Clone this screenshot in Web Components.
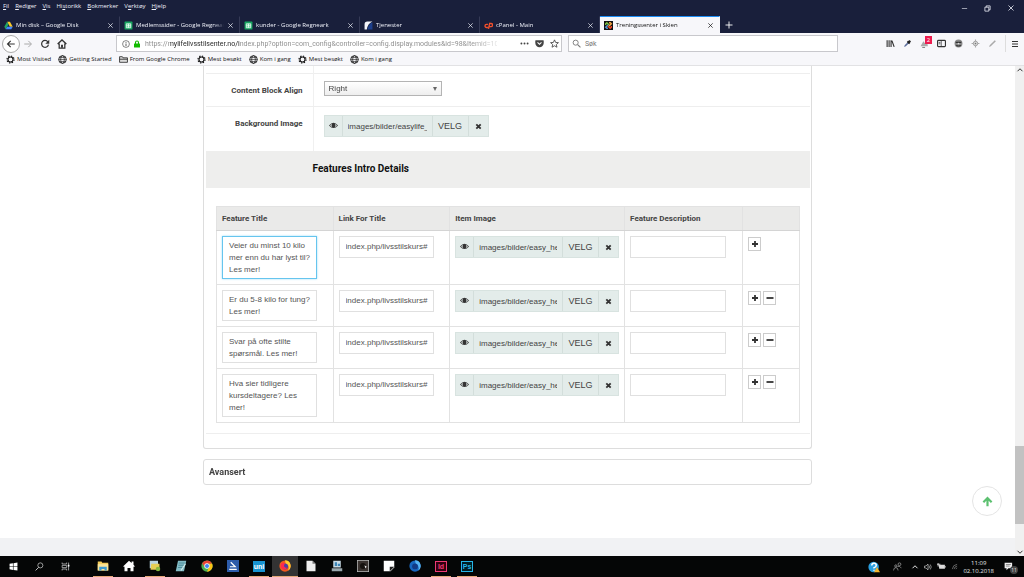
<!DOCTYPE html>
<html lang="no">
<head>
<meta charset="utf-8">
<title>Treningssenter i Skien</title>
<style>
html, body { height: 100%; }
body { margin: 0; display: flex; flex-direction: column; background: #fff; font-family: "Liberation Sans", Arial, sans-serif; font-size: 8px; color: #444; overflow: hidden; }
settings-page { flex: 1; min-height: 0; }
</style>
</head>
<body>
<browser-chrome>
  <browser-tab slot="tabs" icon="drive">Min disk – Google Disk</browser-tab>
  <browser-tab slot="tabs" icon="sheet">Medlemssider - Google Regneark</browser-tab>
  <browser-tab slot="tabs" icon="sheet">kunder - Google Regneark</browser-tab>
  <browser-tab slot="tabs" icon="page">Tjenester</browser-tab>
  <browser-tab slot="tabs" icon="cpanel">cPanel - Main</browser-tab>
  <browser-tab slot="tabs" icon="joomla" active>Treningssenter i Skien</browser-tab>
  <bookmark-link slot="bookmarks" icon="gear">Most Visited</bookmark-link>
  <bookmark-link slot="bookmarks" icon="globe">Getting Started</bookmark-link>
  <bookmark-link slot="bookmarks" icon="folder">From Google Chrome</bookmark-link>
  <bookmark-link slot="bookmarks" icon="gear">Mest besøkt</bookmark-link>
  <bookmark-link slot="bookmarks" icon="globe">Kom i gang</bookmark-link>
  <bookmark-link slot="bookmarks" icon="gear">Mest besøkt</bookmark-link>
  <bookmark-link slot="bookmarks" icon="globe">Kom i gang</bookmark-link>
</browser-chrome>
<settings-page></settings-page>
<task-bar></task-bar>

<script>
const stroke = (d, c = 'currentColor', w = 1.6) => `<path d="${d}" fill="none" stroke="${c}" stroke-width="${w}"/>`;
const ICONS = {
  drive: '<path d="M5.5 1.5h5L15.500 10h-5z" fill="#fbc926"/><path d="M5.500 1.500L.5 10.200 3 14.500 8 6z" fill="#20a464"/><path d="M5.700 10h9.800L13 14.500H3z" fill="#4387fd"/>',
  sheet: '<rect x="1" y="1" width="14" height="14" rx="1" fill="#18a560"/><path d="M4 5h8v7H4zM4 8.500h8M8 5v7" fill="#4fc98a" stroke="#fff" stroke-width="1.300"/>',
  page: '<path d="M1 15V6q0-5 5-5h9Q7 4 5 15z" fill="#f4f6fb"/><path d="M6 15Q8 5 15 2v13z" fill="#1c3f8c"/>',
  cpanel: '<path d="M7 6H4.500a2.500 2.500 0 0 0 0 5.500H7M8 14l2-9.500h2.500a2.500 2.500 0 0 1 0 5.500H9" fill="none" stroke="#f4502c" stroke-width="2.400"/>',
  joomla: '<rect width="16" height="16" fill="#111"/><path d="M3 7V5l2-2 4 4" fill="none" stroke="#7ac143" stroke-width="2.500"/><path d="M9 3h2l2 2-4 4" fill="none" stroke="#f9a541" stroke-width="2.500"/><path d="M13 9v2l-2 2-4-4" fill="none" stroke="#f44321" stroke-width="2.500"/><path d="M7 13H5l-2-2 4-4" fill="none" stroke="#5091cd" stroke-width="2.500"/>',
  close: stroke('M3 3l10 10M13 3L3 13'),
  plusthin: stroke('M8 1v14M1 8h14', 'currentColor', 1.8),
  min: stroke('M2 8h12', 'currentColor', 1.4),
  restore: stroke('M2 5h9v9H2zM5 5V2h9v9h-3', 'currentColor', 1.8),
  gear: '<circle cx="8" cy="8" r="4.500" fill="none" stroke="currentColor" stroke-width="2"/><circle cx="8" cy="8" r="6.300" fill="none" stroke="currentColor" stroke-width="2" stroke-dasharray="2.400 2.550"/>',
  globe: '<circle cx="8" cy="8" r="6.800" fill="none" stroke="currentColor" stroke-width="1.500"/><path d="M1 8h14M2.500 4.500h11M2.500 11.500h11" stroke="currentColor" stroke-width="1"/><ellipse cx="8" cy="8" rx="3.300" ry="6.800" fill="none" stroke="currentColor" stroke-width="1.200"/>',
  folder: '<path d="M1 13V3h5l1 2h8v8zM1 7.500h14" fill="#ddd" stroke="currentColor" stroke-width="1.300"/>',
  back: stroke('M14 8H3M7.500 3L2.500 8l5 5', 'currentColor', 1.9),
  forward: stroke('M2 8h11M8.500 3l5 5-5 5'),
  reload: stroke('M12.500 4.500A5.500 5.500 0 1 0 13.500 9', 'currentColor', 2) + '<path d="M14.800 1v6.500H8.500z" fill="currentColor"/>',
  home: stroke('M1 8l7-6.500L15 8M3.500 7v7.500h9V7', 'currentColor', 2) + '<path d="M6.500 9h3v5h-3z" fill="currentColor"/>',
  info: '<circle cx="8" cy="8" r="6.800" fill="none" stroke="currentColor" stroke-width="1.200"/><path d="M8 7v5M8 4v1.600" stroke="currentColor" stroke-width="1.600"/>',
  lock: '<rect x="2" y="7" width="12" height="8" rx="1" fill="#12bc00"/><path d="M5 8V5a3 3 0 0 1 6 0v3" fill="none" stroke="#12bc00" stroke-width="2.200"/>',
  dots: '<circle cx="2.500" cy="8" r="1.700" fill="currentColor"/><circle cx="8" cy="8" r="1.700" fill="currentColor"/><circle cx="13.500" cy="8" r="1.700" fill="currentColor"/>',
  pocket: '<path d="M1.500 2h13q1 0 1 1v4a7.500 7.500 0 0 1-15 0V3q0-1 1-1z" fill="currentColor"/><path d="M4.500 6L8 9.500 11.500 6" fill="none" stroke="#fff" stroke-width="1.800"/>',
  star: '<path d="M8 1.500l2 4.600 5 .4-3.800 3.200 1.200 4.900L8 12l-4.400 2.600 1.200-4.900L1 6.500l5-.4z" fill="none" stroke="currentColor" stroke-width="1.500"/>',
  search: '<circle cx="6.500" cy="6.500" r="4.500" fill="none" stroke="currentColor" stroke-width="1.600"/><path d="M10 10l5 5" stroke="currentColor" stroke-width="1.900"/>',
  library: stroke('M2 2v12M5.500 2v12M9 2v12M10.500 3l4 11', 'currentColor', 2),
  dropper: '<path d="M2 14l1-3 6-6 2 2-6 6z" fill="#5b6d9b"/><path d="M8 4l4 4M10 6l3-3" stroke="#222" stroke-width="3.500"/>',
  alert: '<path d="M1 13l5-9 4 5 3-2 1 6z" fill="#aaa"/><path d="M4 15h5" stroke="#888" stroke-width="2"/>',
  sidebar: '<rect x="1" y="2.500" width="14" height="11" rx="1.500" fill="none" stroke="currentColor" stroke-width="2"/><path d="M7.500 3v10M3 6h3M3 8.500h3" stroke="currentColor" stroke-width="1.300"/>',
  ball: '<circle cx="8" cy="8" r="7" fill="#888"/><path d="M3 6h10M4 11q4 3 8 0" stroke="#333" stroke-width="2" fill="none"/><circle cx="8" cy="8" r="1.500" fill="#ddd"/>',
  target: '<path d="M8 1v14M1 8h14" stroke="#aaa" stroke-width="2"/><circle cx="8" cy="8" r="4" fill="#ddd" stroke="#999" stroke-width="1.500"/><circle cx="8" cy="8" r="1.500" fill="#777"/>',
  pencil: '<path d="M2 14l1-3L12 2l2 2-9 9z" fill="#aaa"/>',
  menu: stroke('M2 3h12M2 8h12M2 13h12', 'currentColor', 2),
  eye: '<path d="M0 8q8-10 16 0-8 9-16 0z" fill="currentColor"/><path d="M2 8q2-2.500 3-3-1 3.500 0 6Q3.500 10 2 8zM14 8q-2-2.500-3-3 1 3.500 0 6 2-1 3-3z" fill="#e3ecea"/>',
  cross: stroke('M3 3l10 10M13 3L3 13', 'currentColor', 4.200),
  plus: stroke('M8 2v12M2 8h12', 'currentColor', 3.600),
  minus: stroke('M1 8h14', 'currentColor', 3.600),
  up: stroke('M8 15V4M2 9l6-6 6 6', 'currentColor', 3.200),
  caretup: stroke('M3 10.500L8 5.500l5 5', 'currentColor', 2),
  caretdown: stroke('M3 5.500l5 5 5-5', 'currentColor', 2),
  windows: '<path d="M1 3l6-1v5.500H1zM8 2l7-1v6.500H8zM1 8.500h6V14l-6-1zM8 8.500h7V15l-7-1z" fill="#fff"/>',
  find: '<circle cx="9.500" cy="6" r="4.500" fill="none" stroke="#ddd" stroke-width="1.200"/><path d="M6.500 9.500L1 15" stroke="#ddd" stroke-width="1.500"/>',
  taskview: stroke('M2 1v2.500h8V1M2 15v-2.500h8V15M2 6h8v4H2zM13.500 1v14', '#ccc', 1.3) + '<path d="M12 5h3v3h-3z" fill="#fff"/>',
  explorer: '<path d="M1 2h5l1 1.500h8V14H1z" fill="#f6cd5b"/><path d="M1 5.500h14V14H1z" fill="#fbe59b"/><path d="M3 14V9h10v5h-3v-2H6v2z" fill="#3f9bd1"/>',
  house: '<path d="M0 8.500L8 1l3.500 3V2H14v4.300l2 2.200-2 .5v6h-4v-4.500H6V15H2V9z" fill="#fff"/>',
  files: '<rect x="1" y="1" width="11" height="10" fill="#b9d3df"/><path d="M3 5h11v8H2z" fill="#e6ce54"/><circle cx="12" cy="12" r="3" fill="#87b93f"/>',
  notes: '<path d="M4 1h11l-3 14H1z" fill="#83bcc5"/><path d="M5 4h8M4.500 7h8M4 10h7" stroke="#3d7e8e"/><path d="M8 14L14 5" stroke="#d8f1ef" stroke-width="1.500"/>',
  chrome: '<circle cx="8" cy="8" r="7.500" fill="#4caf50"/><path d="M8 .5a7.500 7.500 0 0 1 6.800 4.500H8L5 9.500 1.500 4.300A7.500 7.500 0 0 1 8 .5z" fill="#e94335"/><path d="M14.800 5A7.500 7.500 0 0 1 8 15.500L11.500 8l-1-3z" fill="#fbc116"/><circle cx="8" cy="8" r="3.600" fill="#fff"/><circle cx="8" cy="8" r="2.700" fill="#4285f4"/>',
  scan: '<rect width="16" height="16" fill="#2d5caa"/><path d="M5 3l6 6H4M3 12.500h10" fill="none" stroke="#fff" stroke-width="1.600"/>',
  firefox: '<circle cx="8" cy="8" r="7.500" fill="#f3581f"/><path d="M8 .5a7.500 7.500 0 0 1 4 13.900Q15 7 9 5z" fill="#ffcb2e"/><circle cx="8" cy="8.500" r="4" fill="#4b3fa6"/><path d="M3 5q3-3 5 0-2 1-1 4 2 2 4 1-2 4-6 2-4-2-2-7z" fill="#ff2a4f"/>',
  doc: '<path d="M2 1h8l4 4v10H2z" fill="#eee"/><path d="M10 1v4h4z" fill="#777"/>',
  picture: '<path d="M3 1h10v9H3z" fill="#c8dbe6"/><path d="M1 11h14v4H1z" fill="#9aa8ae"/><path d="M5 3h3v5H5zM9 5h3v3H9z" fill="#3d86b7"/>',
  camera: '<rect x=".5" y=".5" width="15" height="15" fill="#39322f" stroke="#bbb"/><circle cx="8" cy="8" r="4" fill="#16120f"/><path d="M10 7l3 2-2 2z" fill="#eee"/>',
  sticky: '<path d="M1 1h14v9l-5 5H1z" fill="#fff"/><path d="M9 15V9h6z" fill="#222"/>',
  firefoxdev: '<circle cx="8" cy="8" r="7.500" fill="#1767c0"/><path d="M8 .5A7.500 7.500 0 0 1 12 14.400Q15 8 9 5z" fill="#57b4f3"/><circle cx="8" cy="8.500" r="3.800" fill="#123a86"/>',
  help: '<circle cx="7.500" cy="8" r="7" fill="#2a9fe0"/><path d="M5 6q0-3 3-3t3 2.500T8 9v1M8 11.500v1.500" fill="none" stroke="#fff" stroke-width="2"/><path d="M8 15l4-7 4 7z" fill="#f5b52e"/>',
  people: '<circle cx="5" cy="7" r="2" fill="none" stroke="#ccc"/><path d="M1 15q0-5 4-5t4 5M8 8q4-2 7 3" fill="none" stroke="#ccc"/><circle cx="11.500" cy="4" r="2.500" fill="none" stroke="#ccc"/>',
  speaker: '<path d="M1 6h3l4-4v12l-4-4H1z" fill="none" stroke="#ddd" stroke-width="1.200"/><path d="M10 5q2 3 0 6M12.500 3q4 5 0 10" fill="none" stroke="#ddd" stroke-width="1.200"/>',
  battery: '<path d="M3 5h11v7H4z" fill="#ddd"/><path d="M0 4h6M2 2v6M14.500 7v3" stroke="#ddd" stroke-width="1.600"/>',
  wifi: stroke('M14 3Q4 4 3 14M14 7q-6 1-7 7M14 11q-2 1-3 3', '#aaa', 1.300),
  notify: '<path d="M1 1h12v9H7l-3 3v-3H1z" fill="#eee"/><path d="M3 4h8M3 6.500h6" stroke="#555"/>'
};

class Base extends HTMLElement {
  render(html) {
    if (!this.shadowRoot) this.attachShadow({ mode: 'open' });
    this.shadowRoot.innerHTML = html;
  }
}
const RESET = 'button{all:unset;box-sizing:border-box;display:inline-flex;align-items:center;justify-content:center;cursor:pointer}input,textarea,select{font:inherit;color:inherit;margin:0;box-sizing:border-box;outline:0;border-radius:0}a{color:inherit;text-decoration:none}';

customElements.define('ui-icon', class extends Base {
  connectedCallback() {
    const size = this.getAttribute('size') || 9;
    this.render(`<style>:host{display:inline-flex;flex:none;width:${size}px;height:${size}px}svg{width:100%;height:100%}</style>
      <svg viewBox="0 0 16 16" aria-hidden="true">${ICONS[this.getAttribute('name')]}</svg>`);
  }
});

customElements.define('browser-tab', class extends Base {
  connectedCallback() {
    this.render(`<style>${RESET}
      :host{display:flex;align-items:center;flex:0 1 120px;min-width:0;box-sizing:border-box;padding:0 5px 0 4px;color:#eef0f8;border-right:1px solid #353a56;border-top:1px solid transparent}
      :host([active]){background:#f7f7fa;color:#111;border-top-color:#1c8df5;border-right-color:#f7f7fa}
      .title{flex:1;min-width:0;margin:0 3px;overflow:hidden;white-space:nowrap;line-height:10px;justify-content:flex-start;mask-image:linear-gradient(90deg,#000 88%,transparent)}
      </style><ui-icon name="${this.getAttribute('icon')}" size="9"></ui-icon><button class="title" role="tab"><slot></slot></button><button aria-label="Lukk fane"><ui-icon name="close" size="7"></ui-icon></button>`);
  }
});

customElements.define('bookmark-link', class extends Base {
  connectedCallback() {
    this.render(`<style>${RESET}:host{display:block}a{display:flex;align-items:center;gap:2px;line-height:9px;white-space:nowrap}</style>
      <a href="#"><ui-icon name="${this.getAttribute('icon')}" size="9"></ui-icon><slot></slot></a>`);
  }
});

customElements.define('browser-chrome', class extends Base {
  connectedCallback() {
    const menu = ['<u>F</u>il', '<u>R</u>ediger', '<u>V</u>is', 'Hi<u>s</u>torikk', '<u>B</u>okmerker', 'V<u>e</u>rktøy', '<u>H</u>jelp'];
    const tools = [['library', 'Bibliotek'], ['dropper', 'Fargevelger'], ['alert', 'Varsler'], ['sidebar', 'Sidestolpe'], ['ball', 'Utvidelse'], ['target', 'Posisjon'], ['pencil', 'Rediger']];
    this.render(`<style>${RESET}
      :host{display:block;font-family:"Open Sans","Noto Sans",sans-serif;font-size:6px;color:#111}
      .top{display:flex;justify-content:space-between;height:16px;background:#191f3b;color:#eef0f8}
      .menu{display:flex;gap:6px;padding:0 3px;height:12px}
      .menu u{text-underline-offset:1px}
      .window{display:flex;gap:16px;padding:0 9px 0 0}
      .tabs{display:flex;height:17px;background:#191f3b;color:#fff}
      .new{width:18px}
      .nav{display:flex;align-items:center;height:21px;background:#f7f7fa;color:#333}
      .buttons{display:flex;align-items:center;gap:7px;padding-left:2px;margin-right:49px}
      .back{width:18px;height:18px;margin-right:-4px;border:1px solid #aaa;border-radius:50%;background:#fff}
      .off{color:#aaa}
      .box{display:flex;align-items:center;box-sizing:border-box;height:17px;border:1px solid #c8c8cc;background:#fff;min-width:0;padding:0 3px}
      .url{flex:5 1 0;gap:3px;padding-left:5px;padding-right:2px}
      .find{flex:3 1 0;margin-left:6px;gap:4px;color:#777}
      input{border:0;padding:0;background:none;flex:1;min-width:0;height:13px;font-size:7px;font-family:Roboto,"Open Sans",sans-serif}
      input::placeholder{color:#777}
      .url input{margin:0 20px 0 1px;background:linear-gradient(90deg,#8a8a8a 25px,#222 25px,#222 95px,#8a8a8a 95px,#8a8a8a 325px,transparent 360px);background-clip:text;-webkit-background-clip:text;-webkit-text-fill-color:transparent}
      .actions{display:flex;gap:6px;color:#444}
      .tools{display:flex;align-items:center;gap:8px;margin-left:48px}
      .badged{position:relative}
      .badge{position:absolute;left:5px;top:-3px;width:7px;height:8px;background:#ed1c4f;color:#fff;line-height:8px;text-align:center}
      .more{border-left:1px solid #ddd;height:17px;padding:0 5px}
      .bookmarks{display:flex;align-items:center;gap:7px;height:11px;padding:0 6px;background:#f7f7fa;border-bottom:1px solid #e2e2e4}
      </style>
      <div class="top"><nav class="menu">${menu.map(m => `<button><span>${m}</span></button>`).join('')}</nav>
        <div class="window"><button aria-label="Minimer"><ui-icon name="min" size="7"></ui-icon></button><button aria-label="Gjenopprett"><ui-icon name="restore" size="7"></ui-icon></button><button aria-label="Lukk"><ui-icon name="close" size="8"></ui-icon></button></div></div>
      <div class="tabs" role="tablist"><slot name="tabs"></slot><button class="new" aria-label="Ny fane"><ui-icon name="plusthin" size="8"></ui-icon></button></div>
      <div class="nav"><div class="buttons"><button class="back" aria-label="Tilbake"><ui-icon name="back" size="10"></ui-icon></button><button class="off" aria-label="Frem"><ui-icon name="forward" size="10"></ui-icon></button><button aria-label="Last på nytt"><ui-icon name="reload" size="10"></ui-icon></button><button aria-label="Hjem"><ui-icon name="home" size="10"></ui-icon></button></div>
        <div class="box url"><ui-icon name="info" size="8"></ui-icon><ui-icon name="lock" size="8"></ui-icon><input aria-label="Adresse" value="https://mylifelivsstilsenter.no/index.php?option=com_config&amp;controller=config.display.modules&amp;id=98&amp;Itemid=101"><div class="actions"><ui-icon name="dots"></ui-icon><ui-icon name="pocket"></ui-icon><ui-icon name="star"></ui-icon></div></div>
        <div class="box find"><ui-icon name="search"></ui-icon><input aria-label="Søk" placeholder="Søk"></div>
        <div class="tools">${tools.map(([n, l]) => `<button class="badged" aria-label="${l}"><ui-icon name="${n}"></ui-icon>${n === 'alert' ? '<span class="badge">2</span>' : ''}</button>`).join('')}<button class="more" aria-label="Meny"><ui-icon name="menu" size="8"></ui-icon></button></div></div>
      <nav class="bookmarks"><slot name="bookmarks"></slot></nav>`);
  }
});

customElements.define('image-picker', class extends Base {
  connectedCallback() {
    this.render(`<style>${RESET}
      :host{display:flex;box-sizing:border-box;height:22px;background:#e3ecea;border:1px solid #d8e3e0;color:#444}
      button{flex:none;color:#333}
      button+button,.velg{border-left:1px solid #d3dedb}
      .eye{width:18px;padding-bottom:2px;border-right:1px solid #d3dedb}
      .velg{width:36px;font-size:9px;color:#444}
      .clear{width:20px}
      input{flex:1;min-width:0;border:0;background:none;padding:0 5px}
      </style><button class="eye" aria-label="Forhåndsvis"><ui-icon name="eye" size="9"></ui-icon></button><input readonly aria-label="Bilde" value="${this.getAttribute('value')}"><button class="velg">VELG</button><button class="clear" aria-label="Fjern"><ui-icon name="cross" size="7"></ui-icon></button>`);
  }
});

customElements.define('form-row', class extends Base {
  connectedCallback() {
    this.render(`<style>
      :host{display:grid;grid-template-columns:3fr 14fr;box-sizing:border-box;border-bottom:1px solid #eee}
      .label{padding:8px 10px 0 0;text-align:right;font:bold 8px/18px Roboto,sans-serif;color:#444}
      .field{border-left:1px solid #f0f0f0;padding:7px 10px 0}
      </style><div class="label"><slot name="label"></slot></div><div class="field"><slot></slot></div>`);
  }
});

customElements.define('feature-table', class extends Base {
  connectedCallback() {
    const rows = [['Veier du minst 10 kilo mer enn du har lyst til? Les mer!', 3], ['Er du 5-8 kilo for tung? Les mer!', 2], ['Svar på ofte stilte spørsmål. Les mer!', 2], ['Hva sier tidligere kursdeltagere? Les mer!', 3]];
    this.render(`<style>${RESET}
      :host{display:block}
      table{width:100%;table-layout:fixed;border-collapse:collapse;border:1px solid #ddd}
      th,td{border:1px solid #e2e2e2;padding:5px;text-align:left;vertical-align:top}
      th{background:#eaeae9;padding:6px 5px 5px;font:bold 8px/12px Roboto,sans-serif;color:#444;border-bottom-color:#d4d4d4}
      .c1,.c2{width:20%}.c3{width:30%}.c5{width:57px}
      textarea,td input{display:block;width:90%;border:1px solid #e0e0e0;background:#fff;color:#555;line-height:12px;padding:3px 2px 2px 6px;resize:none;overflow:hidden}
      textarea:focus,.current{border-color:#66c5ee;box-shadow:0 0 2px #9bdcf8}
      td input{height:22px;padding-bottom:5px}
      .acts{display:flex;gap:2px}
      .acts button{width:13px;height:14px;margin-top:1px;border:1px solid #ccc;color:#333}
      </style><table><colgroup><col class="c1"><col class="c2"><col class="c3"><col class="c4"><col class="c5"></colgroup>
      <thead><tr><th>Feature Title</th><th>Link For Title</th><th>Item Image</th><th>Feature Description</th><th></th></tr></thead>
      <tbody>${rows.map(([t, n], i) => `<tr><td><textarea rows="${n}" aria-label="Feature Title" ${i ? '' : 'class="current"'}>${t}</textarea></td><td><input aria-label="Link For Title" value="index.php/livsstilskurs#"></td><td><image-picker value="images/bilder/easy_heart.png"></image-picker></td><td><input aria-label="Feature Description"></td><td><div class="acts"><button aria-label="Legg til"><ui-icon name="plus" size="8"></ui-icon></button>${i ? '<button aria-label="Fjern"><ui-icon name="minus" size="8"></ui-icon></button>' : ''}</div></td></tr>`).join('')}</tbody></table>`);
    const current = this.shadowRoot.querySelector('.current');
    current.focus();
    current.setSelectionRange(current.value.length, current.value.length);
  }
});

customElements.define('settings-page', class extends Base {
  connectedCallback() {
    this.render(`<style>${RESET}
      :host{display:flex;position:relative}
      main{flex:1;min-width:0;display:flex;flex-direction:column}
      .content{flex:1;min-height:0;display:grid;grid-template-columns:1fr 3fr 1fr;align-items:start}
      .column{grid-column:2}
      .panel{border:1px solid #ddd;border-top:0;border-radius:0 0 3px 3px;padding:0 1px 14px 2px}
      form-row{min-height:33px}
      .first{min-height:8px;height:8px}
      .image{min-height:44px;border-bottom:0}
      select{display:block;width:118px;height:15px;padding:0 12px 0 4px;border:1px solid #b4b4b4;font-size:8px;color:#444;appearance:none;background:linear-gradient(#fff,#eee)}
      .choice{position:relative;width:118px}
      .choice::after{content:"";position:absolute;right:5px;top:6px;border:2px solid transparent;border-top:4px solid #666;border-bottom:0}
      .image image-picker{width:165px;margin-top:1px}
      h2{margin:0;display:grid;grid-template-columns:3fr 14fr;background:#eeeeed;font:bold 10px/36px Roboto,sans-serif;color:#111;padding-bottom:1px}
      h2 span{grid-column:2}
      .table{padding:18px 10px 10px;border-bottom:1px solid #eee}
      .advanced{display:flex;width:100%;justify-content:flex-start;margin-top:10px;height:26px;padding:0 5px;border:1px solid #ddd;border-radius:3px;font:bold 9px Roboto,sans-serif;color:#444}
      footer{height:18px;background:#f1f2f4}
      .scroll{display:flex;flex-direction:column;align-items:center;width:9px;background:#f0f0f0;color:#333;box-sizing:border-box}
      .scroll i{width:100%;background:#c2c2c2;flex:78}
      .gap{flex:371}.rest{flex:24}
      .totop{position:absolute;right:22px;bottom:40px;width:30px;height:30px;border:1px solid #e4e4e4;border-radius:50%;color:#5cc070;background:#fff}
      </style>
      <main><div class="content"><div class="column"><section class="panel">
        <form-row class="first"></form-row>
        <form-row><label slot="label" for="align">Content Block Align</label><div class="choice"><select id="align"><option>Right</option><option>Left</option></select></div></form-row>
        <form-row class="image"><span slot="label">Background Image</span><image-picker value="images/bilder/easylife_"></image-picker></form-row>
        <h2><span>Features Intro Details</span></h2>
        <div class="table"><feature-table></feature-table></div>
      </section><button class="advanced">Avansert</button></div></div><footer></footer></main>
      <div class="scroll" aria-hidden="true"><ui-icon name="caretup" size="8"></ui-icon><span class="gap"></span><i></i><span class="rest"></span><ui-icon name="caretdown" size="8"></ui-icon></div>
      <button class="totop" aria-label="Til toppen"><ui-icon name="up" size="11"></ui-icon></button>`);
  }
});

customElements.define('task-item', class extends Base {
  connectedCallback() {
    const text = this.textContent.trim(), n = this.getAttribute('icon');
    this.render(`<style>${RESET}:host{display:flex;width:26px;box-sizing:border-box;padding:0 3px}
      button{flex:1;border-bottom:1px solid transparent}
      :host([open]) button{border-bottom-color:#e5a878}
      :host([active]){padding:0;background:#333}
      .tile{display:grid;place-items:center;box-sizing:border-box;height:11px;min-width:12px;font:bold 7px/9px "Liberation Sans",sans-serif;color:var(--ink,#fff);background:var(--fill,#1793d1);border:1px solid var(--ink,#1793d1)}
      </style><button aria-label="${n || text}">${n ? `<ui-icon name="${n}" size="${this.getAttribute('size') || 12}"></ui-icon>` : '<span class="tile"><slot></slot></span>'}</button>`);
  }
});

customElements.define('task-bar', class extends Base {
  connectedCallback() {
    this.render(`<style>${RESET}
      :host{display:flex;height:21px;background:#050606;color:#e6e6e6;font-family:"Open Sans","Noto Sans",sans-serif;font-size:6px}
      .system,.apps{display:flex}.apps{margin-left:12px}
      .id{--ink:#ee3a75;--fill:#33000f}.ps{--ink:#26b5e8;--fill:#001d26}
      .tray{display:flex;align-items:center;gap:5px;margin-left:auto;padding-right:10px}
      .person{margin:0 4px 0 8px}
      time{text-align:center;line-height:8px;font-size:6px}
      .note{position:relative;display:flex;margin-left:5px}
      .note b{position:absolute;left:6px;top:4px;width:8px;height:8px;border-radius:50%;background:#444;font:5px/8px "Open Sans",sans-serif;text-align:center}
      </style>
      <div class="system"><task-item icon="windows" size="9"></task-item><task-item icon="find" size="9"></task-item><task-item icon="taskview" size="9"></task-item></div>
      <div class="apps"><task-item icon="explorer" open></task-item><task-item icon="house"></task-item><task-item icon="files" open></task-item><task-item icon="notes"></task-item><task-item icon="chrome"></task-item><task-item icon="scan"></task-item><task-item open>uni</task-item><task-item icon="firefox" open active></task-item><task-item icon="doc"></task-item><task-item icon="picture"></task-item><task-item icon="camera"></task-item><task-item icon="sticky"></task-item><task-item icon="firefoxdev"></task-item><task-item class="id" open>Id</task-item><task-item class="ps" open>Ps</task-item></div>
      <div class="tray"><ui-icon name="help" size="12"></ui-icon><ui-icon class="person" name="people" size="9"></ui-icon><ui-icon name="caretup" size="8"></ui-icon><ui-icon name="speaker" size="8"></ui-icon><ui-icon name="battery" size="9"></ui-icon><ui-icon name="wifi" size="7"></ui-icon><time>11:09<br>02.10.2018</time><span class="note"><ui-icon name="notify" size="10"></ui-icon><b>11</b></span></div>`);
  }
});
</script>
</body>
</html>
